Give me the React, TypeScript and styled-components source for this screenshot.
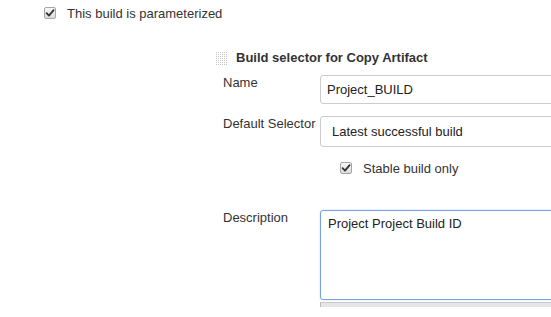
import styled, { createGlobalStyle } from "styled-components";

const GlobalStyle = createGlobalStyle`
  body {
    margin: 0;
    background: #fff;
    font-family: "Liberation Sans", Arial, Helvetica, sans-serif;
    font-size: 13px;
    line-height: 15px;
    color: #333;
    overflow: hidden;
  }
`;

const CheckIcon = () => (
  <svg width="10" height="10" viewBox="0 0 10 10">
    <path
      d="M1.6 5.2 L4 7.6 L8.6 2.2"
      fill="none"
      stroke="#333"
      strokeWidth="1.8"
      strokeLinecap="round"
      strokeLinejoin="round"
    />
  </svg>
);

const Grip = () => (
  <svg width="11" height="13" viewBox="0 0 11 13">
    <defs>
      <pattern id="dots" width="2" height="2" patternUnits="userSpaceOnUse">
        <rect width="1" height="1" fill="#c4c4c4" />
      </pattern>
    </defs>
    <rect width="11" height="13" fill="url(#dots)" />
  </svg>
);

type CheckboxProps = {
  label: string;
};

const Checkbox = ({ label }: CheckboxProps) => (
  <StCheckLabel>
    <StBox>
      <CheckIcon />
    </StBox>
    <span>{label}</span>
  </StCheckLabel>
);

export default function App() {
  return (
    <StPage>
      <GlobalStyle />
      <Checkbox label="This build is parameterized" />
      <StSection>
        <StHeader>
          <StGripWrap>
            <Grip />
          </StGripWrap>
          <StTitle>Build selector for Copy Artifact</StTitle>
        </StHeader>
        <StForm>
          <StLabel>Name</StLabel>
          <StInput type="text" defaultValue="Project_BUILD" />

          <StLabel>Default Selector</StLabel>
          <StSelect>Latest successful build</StSelect>

          <span />
          <StOption>
            <Checkbox label="Stable build only" />
          </StOption>

          <StLabel $spaced>Description</StLabel>
          <StTextareaWrap $spaced>
            <StTextarea defaultValue="Project Project Build ID" />
            <StHandle />
          </StTextareaWrap>
        </StForm>
      </StSection>
    </StPage>
  );
}

const StPage = styled.div`
  box-sizing: border-box;
  width: 100%;
  height: 317px;
  overflow: hidden;
  padding: 6px 0 0 44px;
`;

const StCheckLabel = styled.label`
  display: flex;
  align-items: flex-start;
  gap: 11px;
  height: 15px;
`;

const StBox = styled.span`
  box-sizing: border-box;
  width: 12px;
  height: 12px;
  margin-top: 1px;
  border: 1px solid #a6a6a6;
  border-radius: 2px;
  background: linear-gradient(#f6f6f6, #dcdcdc);
  display: flex;
  align-items: center;
  justify-content: center;
`;

const StSection = styled.div`
  margin: 29px 0 0 172px;
`;

const StHeader = styled.div`
  display: flex;
  align-items: flex-start;
  gap: 9px;
`;

const StGripWrap = styled.div`
  display: flex;
  margin-top: 2px;
`;

const StTitle = styled.h3`
  margin: 0;
  font-size: 13px;
  line-height: 15px;
  font-weight: bold;
`;

const StForm = styled.div`
  display: grid;
  grid-template-columns: 97px 240px;
  row-gap: 12px;
  margin: 10px 0 0 7px;
`;

const StLabel = styled.div<{ $spaced?: boolean }>`
  margin-top: ${({ $spaced }) => ($spaced ? "22px" : "0")};
`;

const StInput = styled.input`
  box-sizing: border-box;
  height: 29px;
  padding: 0 6px;
  border: 1px solid #ccc;
  border-radius: 3px;
  font: inherit;
  color: #222;
  outline: none;
`;

const StSelect = styled.div`
  box-sizing: border-box;
  height: 31px;
  padding: 0 11px;
  border: 1px solid #ccc;
  border-radius: 3px;
  display: flex;
  align-items: center;
  color: #222;
`;

const StOption = styled.div`
  padding: 2px 0 0 20px;
`;

const StTextareaWrap = styled.div<{ $spaced?: boolean }>`
  margin-top: ${({ $spaced }) => ($spaced ? "22px" : "0")};
  display: flex;
  flex-direction: column;
  gap: 2px;
`;

const StTextarea = styled.textarea`
  box-sizing: border-box;
  height: 90px;
  padding: 5px 7px;
  border: 1px solid #72a1e8;
  border-radius: 3px;
  box-shadow: 0 0 2px rgba(102, 150, 230, 0.35);
  font: inherit;
  color: #222;
  resize: none;
  outline: none;
`;

const StHandle = styled.div`
  box-sizing: border-box;
  height: 5px;
  background: #e6e6e6;
  border-top: 1px solid #c8c8c8;
  border-left: 1px solid #bdbdbd;
`;
